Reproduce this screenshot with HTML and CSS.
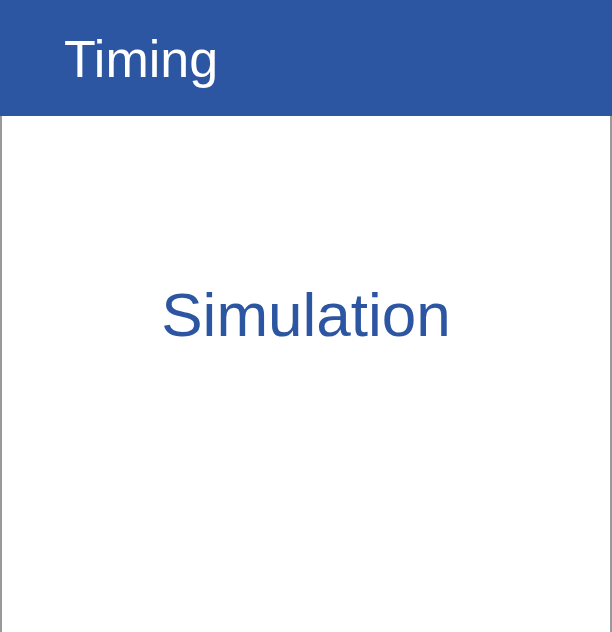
FILE: index.html
```html
<!DOCTYPE html>
<html>
<head>
<meta charset="utf-8">
<link rel="stylesheet" href="styles.css">
</head>
<body>
<div class="page">
  <header class="bar"><h1 class="title">Timing</h1></header>
  <main class="content"><p class="label">Simulation</p></main>
</div>
</body>
</html>
```
FILE: styles.css
```css
html, body { margin: 0; padding: 0; background: #fff; }
.page { width: 612px; height: 632px; display: flex; flex-direction: column; font-family: "Liberation Sans", Arial, sans-serif; }
.bar { height: 116px; background: #2c55a2; display: flex; align-items: center; padding-left: 64px; box-sizing: border-box; }
.title { margin: 0; color: #fff; font-weight: 400; font-size: 52px; line-height: 1; padding-top: 2px; }
.content { flex: 1; border-left: 2px solid #999; border-right: 2px solid #999; display: flex; justify-content: center; padding-top: 168px; }
.label { margin: 0; color: #2c55a2; font-size: 62px; line-height: 1; font-weight: 400; }
```
